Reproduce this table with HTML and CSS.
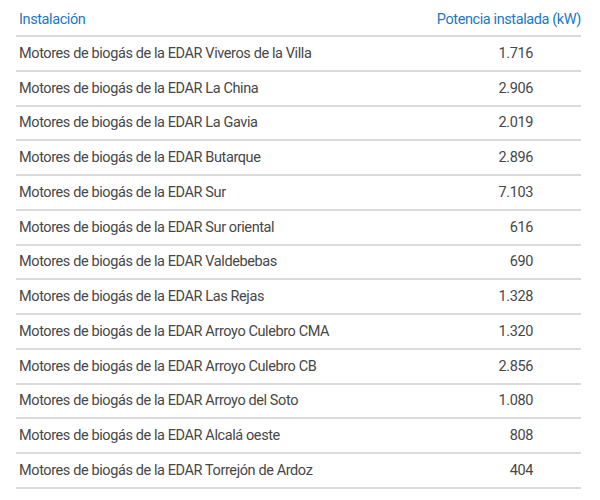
FILE: index.html
```html
<!DOCTYPE html>
<html lang="es">
<head>
<meta charset="utf-8">
<link rel="stylesheet" href="styles.css">
</head>
<body>
<table class="tabla">
  <thead>
    <tr><th class="col-inst">Instalación</th><th class="col-pot">Potencia instalada (kW)</th></tr>
  </thead>
  <tbody>
    <tr><td>Motores de biogás de la EDAR Viveros de la Villa</td><td class="num">1.716</td></tr>
    <tr><td>Motores de biogás de la EDAR La China</td><td class="num">2.906</td></tr>
    <tr><td>Motores de biogás de la EDAR La Gavia</td><td class="num">2.019</td></tr>
    <tr><td>Motores de biogás de la EDAR Butarque</td><td class="num">2.896</td></tr>
    <tr><td>Motores de biogás de la EDAR Sur</td><td class="num">7.103</td></tr>
    <tr><td>Motores de biogás de la EDAR Sur oriental</td><td class="num">616</td></tr>
    <tr><td>Motores de biogás de la EDAR Valdebebas</td><td class="num">690</td></tr>
    <tr><td>Motores de biogás de la EDAR Las Rejas</td><td class="num">1.328</td></tr>
    <tr><td>Motores de biogás de la EDAR Arroyo Culebro CMA</td><td class="num">1.320</td></tr>
    <tr><td>Motores de biogás de la EDAR Arroyo Culebro CB</td><td class="num">2.856</td></tr>
    <tr><td>Motores de biogás de la EDAR Arroyo del Soto</td><td class="num">1.080</td></tr>
    <tr><td>Motores de biogás de la EDAR Alcalá oeste</td><td class="num">808</td></tr>
    <tr><td>Motores de biogás de la EDAR Torrejón de Ardoz</td><td class="num">404</td></tr>
  </tbody>
</table>
</body>
</html>
```
FILE: styles.css
```css
html, body {
  margin: 0;
  padding: 0;
  background: #ffffff;
}
body {
  padding: 0 19px 0 16px;
  font-family: Roboto, "Liberation Sans", sans-serif;
}
.tabla {
  width: 565px;
  border-collapse: collapse;
  font-size: 14.5px;
  letter-spacing: -0.4px;
  color: #474747;
}
.tabla th {
  height: 28px;
  padding: 0 0 7px 3px;
  vertical-align: bottom;
  font-weight: normal;
  color: #1a78c2;
  text-align: left;
  border-bottom: 2px solid #dadada;
}
.tabla th.col-pot {
  text-align: right;
  padding-right: 0;
}
.tabla td {
  height: 32.75px;
  padding: 0 0 0 3px;
  border-bottom: 2px solid #dadada;
}
.tabla td.num {
  text-align: right;
  padding-right: 48px;
}
```
